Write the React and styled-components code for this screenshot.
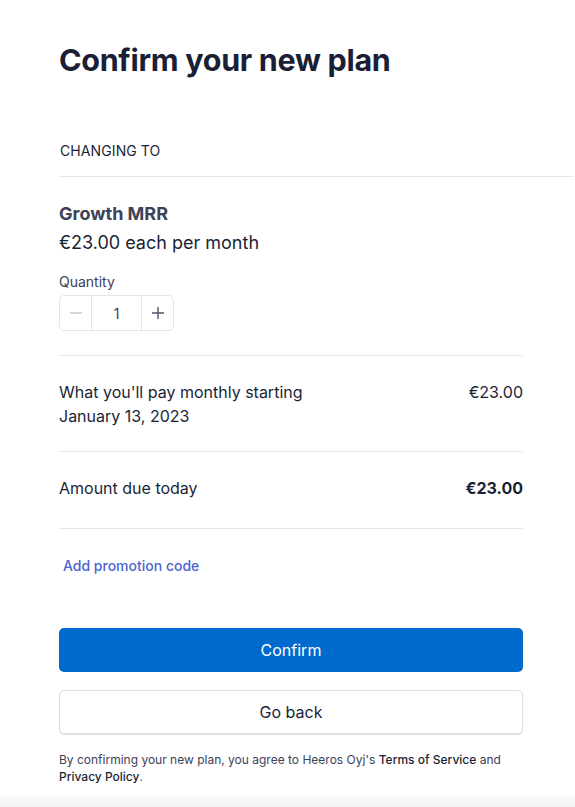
import styled, { createGlobalStyle } from 'styled-components'

const GlobalStyle = createGlobalStyle`
  body {
    margin: 0;
    background: #fff;
    font-family: Inter, "Noto Sans", sans-serif;
    color: #1a1f36;
    -webkit-font-smoothing: antialiased;
  }
`

const Page = styled.div`
  min-height: 807px;
  display: flex;
  flex-direction: column;
  padding-left: 59px;
  box-sizing: border-box;
`

const Title = styled.h1`
  margin: 41px 0 0;
  font-size: 30.5px;
  line-height: 38px;
  font-weight: 700;
  letter-spacing: -0.3px;
  color: #1a1f36;
`

const SectionHead = styled.div`
  margin-top: 62px;
  padding: 0 0 15px 1px;
  font-size: 14px;
  line-height: 20px;
  letter-spacing: 0.1px;
  color: #1a1f36;
  border-bottom: 1px solid #e3e8ee;
  margin-right: 1px;
`

const Column = styled.div`
  width: 464px;
`

const PlanName = styled.div`
  margin-top: 24px;
  font-size: 18px;
  line-height: 26px;
  font-weight: 700;
  color: #3c4257;
`

const PlanPrice = styled.div`
  margin-top: 3px;
  font-size: 18px;
  line-height: 26px;
  color: #1a1f36;
`

const Label = styled.div`
  margin-top: 16px;
  font-size: 14px;
  line-height: 20px;
  color: #3c4257;
`

const Stepper = styled.div`
  margin-top: 3px;
  display: inline-flex;
  height: 36px;
  border: 1px solid #e0e6eb;
  border-radius: 5px;
  box-sizing: border-box;
`

const StepButton = styled.button`
  width: 31px;
  border: none;
  background: transparent;
  display: flex;
  align-items: center;
  justify-content: center;
  padding: 0;
  color: ${p => (p.$disabled ? '#c1c9d2' : '#4f566b')};
`

const StepValue = styled.div`
  width: 49px;
  border-left: 1px solid #e0e6eb;
  border-right: 1px solid #e0e6eb;
  display: flex;
  align-items: center;
  justify-content: center;
  font-size: 14px;
  color: #3c4257;
`

const Row = styled.div`
  display: flex;
  justify-content: space-between;
  align-items: flex-start;
  border-top: 1px solid #e3e8ee;
  padding: ${p => p.$pad};
  font-size: 16px;
  line-height: 24px;
  color: #1a1f36;
`

const Amount = styled.span`
  font-weight: ${p => (p.$bold ? 700 : 400)};
`

const Divider = styled.div`
  border-top: 1px solid #e3e8ee;
`

const PromoLink = styled.a`
  display: block;
  margin: 27px 0 0 4px;
  font-size: 14px;
  line-height: 20px;
  font-weight: 500;
  color: #4c63d2;
  text-decoration: none;
`

const Buttons = styled.div`
  margin-top: 52px;
  display: flex;
  flex-direction: column;
  gap: 18px;
`

const Button = styled.button`
  height: 44px;
  width: 100%;
  border-radius: 5px;
  font-family: inherit;
  font-size: 16px;
  font-weight: 400;
  cursor: pointer;
  border: ${p => (p.$primary ? 'none' : '1px solid #dcdfe4')};
  background: ${p => (p.$primary ? '#006bcc' : '#fff')};
  color: ${p => (p.$primary ? '#fff' : '#1a1f36')};
  box-shadow: ${p => (p.$primary ? 'none' : '0 1px 1px rgba(0,0,0,0.12)')};
`

const Legal = styled.p`
  margin: 17px 0 0;
  font-size: 12px;
  line-height: 17px;
  color: #3c4257;
  b {
    font-weight: 500;
    color: #1a1f36;
  }
`

const Fade = styled.div`
  margin-top: auto;
  margin-left: -59px;
  height: 12px;
  background: linear-gradient(to bottom, #fbfbfb, #f3f3f3);
`

function App() {
  return (
    <Page>
      <GlobalStyle />
      <Title>Confirm your new plan</Title>
      <SectionHead>CHANGING TO</SectionHead>
      <Column>
        <PlanName>Growth MRR</PlanName>
        <PlanPrice>€23.00 each per month</PlanPrice>
        <Label>Quantity</Label>
        <Stepper>
          <StepButton $disabled>
            <svg width="14" height="14" viewBox="0 0 14 14">
              <path d="M1 7h12" stroke="currentColor" strokeWidth="1.4" />
            </svg>
          </StepButton>
          <StepValue>1</StepValue>
          <StepButton>
            <svg width="14" height="14" viewBox="0 0 14 14">
              <path d="M1 7h12M7 1v12" stroke="currentColor" strokeWidth="1.4" />
            </svg>
          </StepButton>
        </Stepper>
        <Row $pad="24px 0 23px" style={{ marginTop: 24 }}>
          <span>What you'll pay monthly starting<br />January 13, 2023</span>
          <Amount>€23.00</Amount>
        </Row>
        <Row $pad="24px 0 28px">
          <span>Amount due today</span>
          <Amount $bold>€23.00</Amount>
        </Row>
        <Divider />
        <PromoLink href="#">Add promotion code</PromoLink>
        <Buttons>
          <Button $primary>Confirm</Button>
          <Button>Go back</Button>
        </Buttons>
        <Legal>
          By confirming your new plan, you agree to Heeros Oyj's <b>Terms of Service</b> and <b>Privacy Policy</b>.
        </Legal>
      </Column>
      <Fade />
    </Page>
  )
}

export default App
